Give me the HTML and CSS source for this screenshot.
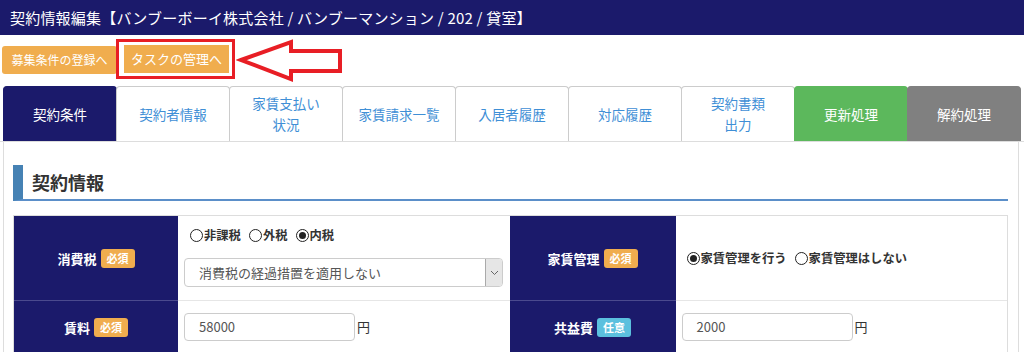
FILE: index.html
```html
<!DOCTYPE html>
<html lang="ja">
<head>
    <meta charset="UTF-8">
    <title>契約情報編集</title>
    <link rel="stylesheet" href="styles.css">
</head>
<body>
    <header class="topbar">契約情報編集【バンブーボーイ株式会社 / バンブーマンション / 202 / 貸室】</header>

    <div class="actions">
        <button class="btn-orange btn-wide">募集条件の登録へ</button>
        <div class="highlight">
            <button class="btn-orange btn-task">タスクの管理へ</button>
        </div>
        <svg class="arrow" width="108" height="44" viewBox="0 0 108 44">
            <polygon points="5,21 55,3 55,12 104,12 104,32 55,32 55,40" fill="#fff" stroke="#e81e25" stroke-width="4" stroke-linejoin="miter"/>
        </svg>
    </div>

    <nav class="tabs">
        <div class="tab active">契約条件</div>
        <div class="tab">契約者情報</div>
        <div class="tab">家賃支払い<br>状況</div>
        <div class="tab">家賃請求一覧</div>
        <div class="tab">入居者履歴</div>
        <div class="tab">対応履歴</div>
        <div class="tab">契約書類<br>出力</div>
        <div class="tab tab-green">更新処理</div>
        <div class="tab tab-gray">解約処理</div>
    </nav>

    <section class="panel">
        <h3 class="section-title">契約情報</h3>

        <div class="form-table">
            <div class="label-cell">消費税 <span class="badge">必須</span></div>
            <div class="value-cell">
                <div class="radios">
                    <span class="radio"><i></i>非課税</span>
                    <span class="radio"><i></i>外税</span>
                    <span class="radio checked"><i></i>内税</span>
                </div>
                <div class="select">
                    <span>消費税の経過措置を適用しない</span>
                    <span class="select-arrow">
                        <svg width="9" height="6" viewBox="0 0 9 6"><path d="M1 1 L4.5 4.5 L8 1" fill="none" stroke="#666" stroke-width="1"/></svg>
                    </span>
                </div>
            </div>
            <div class="label-cell">家賃管理 <span class="badge">必須</span></div>
            <div class="value-cell center">
                <div class="radios">
                    <span class="radio checked"><i></i>家賃管理を行う</span>
                    <span class="radio"><i></i>家賃管理はしない</span>
                </div>
            </div>

            <div class="label-cell">賃料 <span class="badge">必須</span></div>
            <div class="value-cell row2">
                <div class="input">58000</div><span class="unit">円</span>
            </div>
            <div class="label-cell">共益費 <span class="badge badge-info">任意</span></div>
            <div class="value-cell row2">
                <div class="input">2000</div><span class="unit">円</span>
            </div>
        </div>
    </section>
</body>
</html>
```

FILE: styles.css
```css
body {
    margin: 0;
    font-family: "Noto Sans CJK JP", "Liberation Sans", sans-serif;
    color: #333;
    background-color: #fff;
    height: 352px;
    overflow: hidden;
}
.topbar {
    background-color: #1b1a6b;
    color: #fff;
    font-size: 15px;
    letter-spacing: 0.2px;
    height: 35px;
    line-height: 35px;
    padding-left: 10px;
    white-space: nowrap;
}
.actions {
    display: flex;
    align-items: center;
    padding: 5px 0 0 2px;
    height: 40px;
}
.btn-orange {
    background-color: #f0ad4e;
    color: #fff;
    border: none;
    border-radius: 3px;
    font-family: inherit;
    font-size: 12px;
    height: 28px;
    padding: 0;
    line-height: 28px;
}
.btn-wide {
    width: 115px;
}
.btn-task {
    width: 105px;
    border-radius: 0;
    font-size: 13px;
}
.highlight {
    display: flex;
    border: 3px solid #e81e25;
    padding: 3px 3px 3px 5px;
    margin-left: -1px;
    margin-top: -2px;
}
.arrow {
    margin-left: 1px;
    margin-top: 1px;
}
.tabs {
    display: flex;
    margin-top: 6px;
    padding: 0 4px 0 3px;
    height: 55px;
    border-bottom: 1px solid #ddd;
}
.tab {
    flex: 1;
    display: flex;
    align-items: center;
    justify-content: center;
    text-align: center;
    border: 1px solid #ccc;
    border-bottom: none;
    border-radius: 4px 4px 0 0;
    color: #3f8fd6;
    font-size: 13.5px;
    line-height: 21px;
    margin-right: -1px;
}
.tab.active {
    background-color: #1b1a6b;
    border-color: #1b1a6b;
    color: #fff;
}
.tab-green {
    background-color: #5cb85c;
    border-color: #5cb85c;
    color: #fff;
}
.tab-gray {
    background-color: #808080;
    border-color: #808080;
    color: #fff;
}
.panel {
    margin: 0 5px 0 3px;
    border-left: 1px solid #ddd;
    border-right: 1px solid #ddd;
    padding: 23px 10px 0 9px;
}
.section-title {
    margin: 0;
    height: 34px;
    line-height: 34px;
    font-size: 18px;
    font-weight: bold;
    color: #333;
    border-left: 10px solid #4682b4;
    border-bottom: 2px solid #5b8fc9;
    padding-left: 9px;
}
.form-table {
    margin-top: 14px;
    display: grid;
    grid-template-columns: 164px 1fr 166px 1fr;
    grid-template-rows: 84px 54px;
    border: 1px solid #ddd;
}
.label-cell {
    background-color: #1b1a6b;
    color: #fff;
    font-size: 13px;
    font-weight: bold;
    display: flex;
    align-items: center;
    justify-content: center;
    gap: 4px;
    border-top: 1px solid #4b4a8e;
}
.form-table > div:nth-child(-n+4) {
    border-top: none;
}
.value-cell {
    padding: 10px 6px 0 6px;
    border-top: 1px solid #e6e6e6;
}
.value-cell.center {
    display: flex;
    align-items: center;
    padding-top: 0;
    padding-left: 11px;
}
.value-cell.row2 {
    display: flex;
    align-items: flex-start;
    padding-top: 12px;
}
.badge {
    background-color: #f0ad4e;
    color: #fff;
    font-size: 11px;
    font-weight: bold;
    border-radius: 3px;
    padding: 0 6px;
    line-height: 19px;
}
.badge-info {
    background-color: #5bc0de;
}
.radios {
    display: flex;
    gap: 8px;
    font-size: 12.3px;
    font-weight: bold;
    height: 18px;
    align-items: center;
    padding-left: 6px;
}
.value-cell.center .radios {
    padding-left: 0;
}
.radio {
    display: flex;
    align-items: center;
}
.radio i {
    width: 11px;
    height: 11px;
    border: 1px solid #222;
    border-radius: 50%;
    margin-right: 1px;
    position: relative;
}
.radio.checked i::after {
    content: "";
    position: absolute;
    left: 2px;
    top: 2px;
    width: 7px;
    height: 7px;
    border-radius: 50%;
    background-color: #222;
}
.select {
    margin-top: 14px;
    height: 29px;
    border: 1px solid #ccc;
    border-radius: 4px;
    display: flex;
    align-items: center;
    justify-content: space-between;
    font-size: 13px;
    color: #555;
    padding-left: 14px;
    box-sizing: border-box;
    width: 319px;
    overflow: hidden;
}
.select-arrow {
    width: 16px;
    height: 100%;
    background-color: #e6e6e6;
    border-left: 1px solid #aaa;
    display: flex;
    align-items: center;
    justify-content: center;
}
.input {
    width: 171px;
    height: 28px;
    box-sizing: border-box;
    border: 1px solid #ccc;
    border-radius: 4px;
    font-size: 13px;
    color: #555;
    line-height: 26px;
    padding-left: 14px;
}
.unit {
    font-size: 13px;
    line-height: 28px;
    margin-left: 2px;
}
```
